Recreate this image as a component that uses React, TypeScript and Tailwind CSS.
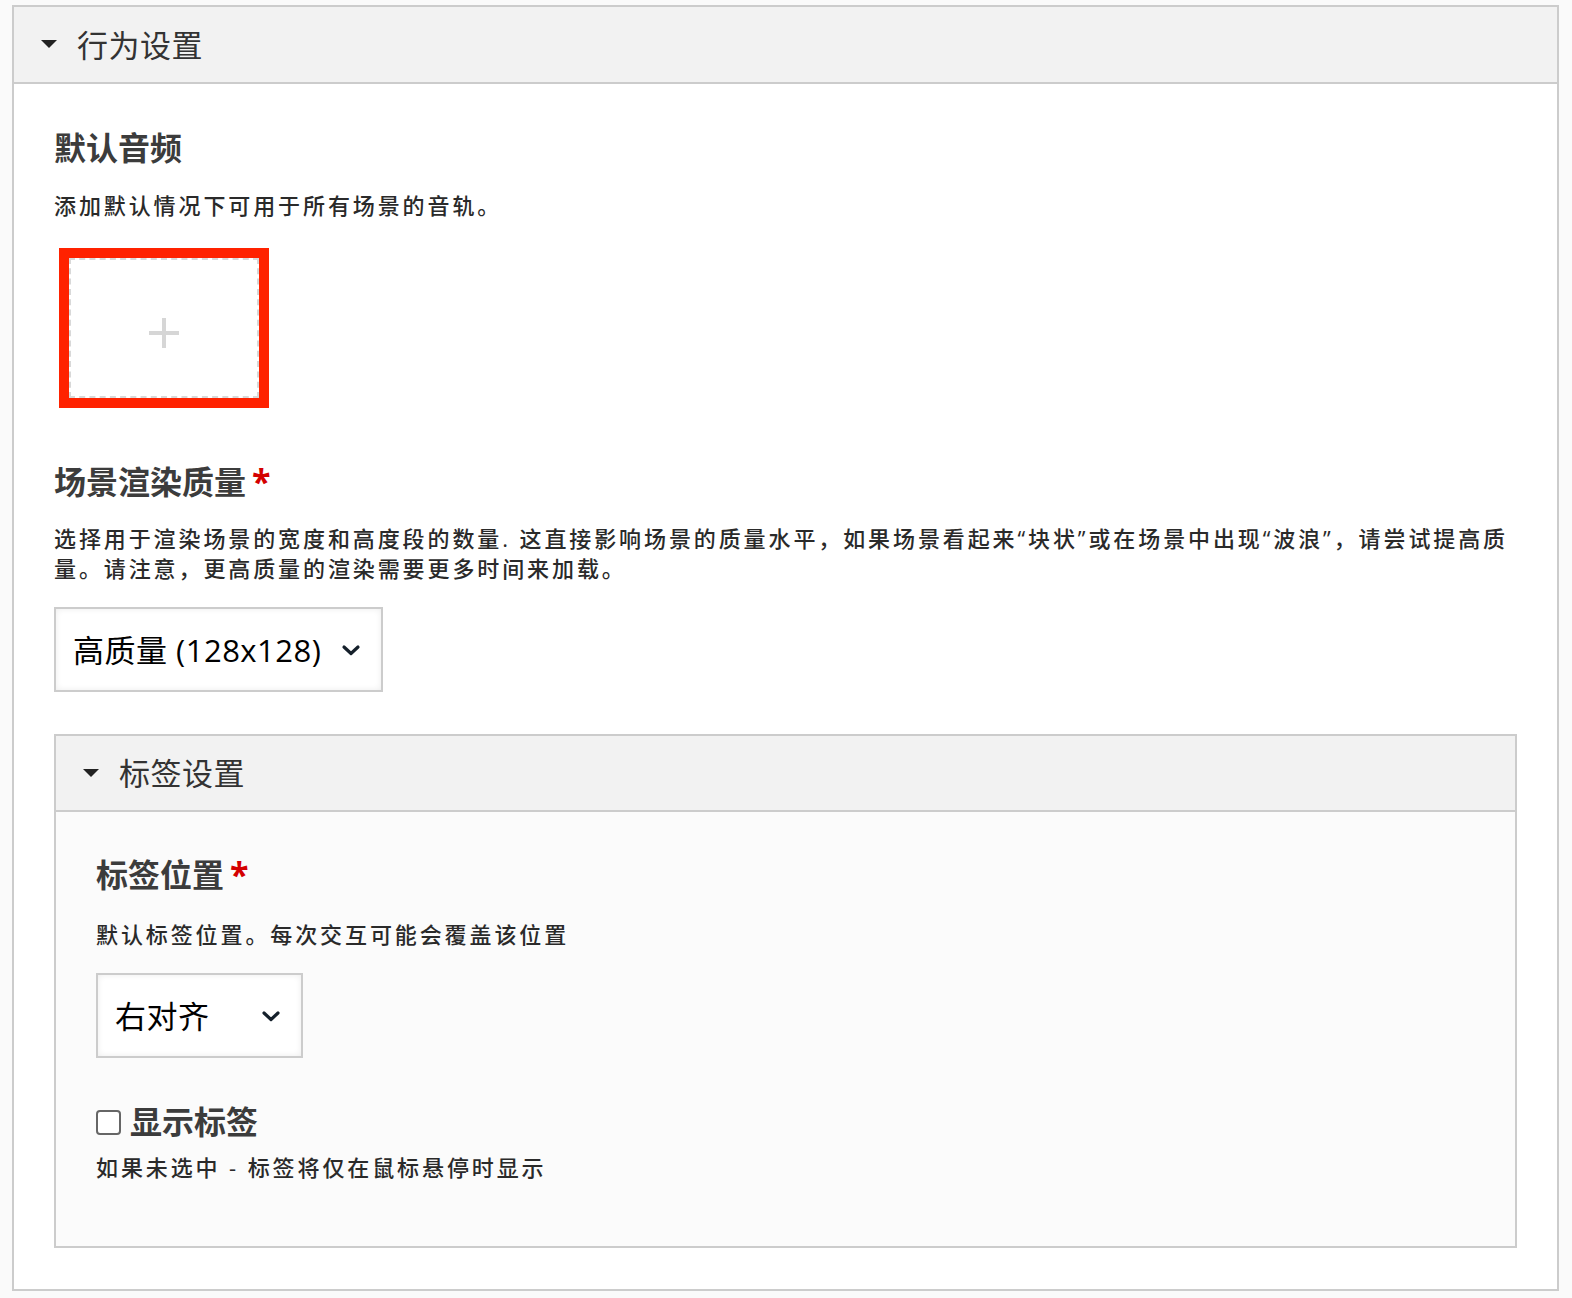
import React from 'react';

const font = { fontFamily: '"Open Sans", "Noto Sans CJK SC", sans-serif' };

function Caret() {
    return (
        <svg width="16" height="9" viewBox="0 0 16 9" className="shrink-0">
            <path d="M0 0 L16 0 L8 8 Z" fill="#222" />
        </svg>
    );
}

function Chevron() {
    return (
        <svg width="20" height="14" viewBox="0 0 20 14" className="shrink-0">
            <path d="M3 4 L10 10.5 L17 4" fill="none" stroke="#15202b" strokeWidth="3.2" strokeLinecap="round" strokeLinejoin="round" />
        </svg>
    );
}

function Select({ label, width }: { label: string; width: string }) {
    return (
        <div className={`${width} h-[85px] flex items-center justify-between pl-[17px] pr-[20px] bg-white border-2 border-[#cccccc] shadow-[inset_0_0_6px_rgba(0,0,0,0.08)]`}>
            <span className="text-[31px] leading-[40px] tracking-[0.5px] text-black">{label}</span>
            <Chevron />
        </div>
    );
}

function Required() {
    return <span className="text-[#d40000] text-[34px] leading-[34px] ml-[6px] relative top-[2px]">*</span>;
}

export default function App() {
    return (
        <div style={font} className="min-h-[1298px] bg-[#fafafa] pt-[5px] pl-[12px]">
            <div className="w-[1547px] border-2 border-[#cccccc] bg-white">
                <div className="h-[77px] bg-[#f2f2f2] border-b-2 border-[#cccccc] flex items-center pl-[27px] gap-[20px]">
                    <Caret />
                    <span className="text-[31px] leading-[40px] tracking-[0.5px] text-[#333]">行为设置</span>
                </div>

                <div className="px-[40px] pt-[44px] pb-[41px]">
                    <h2 className="text-[32px] leading-[40px] font-bold text-[#3c3c3c]">默认音频</h2>
                    <p className="mt-[22px] text-[22px] leading-[30px] tracking-[2.9px] font-medium text-[#2a2a2a]">添加默认情况下可用于所有场景的音轨。</p>

                    <div className="mt-[28px] ml-[5px] w-[210px] h-[160px] border-[10px] border-[#ff2200] bg-white">
                        <div className="w-full h-full border-2 border-dashed border-[#d8d8d8] flex items-center justify-center pt-[10px]">
                            <svg width="34" height="34" viewBox="0 0 34 34">
                                <path d="M17 2 V32 M2 17 H32" stroke="#d6d6d6" strokeWidth="4" />
                            </svg>
                        </div>
                    </div>

                    <h2 className="mt-[54px] text-[32px] leading-[40px] font-bold text-[#3c3c3c] flex items-start">
                        场景渲染质量<Required />
                    </h2>
                    <p className="mt-[21px] text-[22px] leading-[30px] tracking-[2.9px] font-medium text-[#2a2a2a]">
                        选择用于渲染场景的宽度和高度段的数量. 这直接影响场景的质量水平，如果场景看起来“块状”或在场景中出现“波浪”，请尝试提高质量。请注意，更高质量的渲染需要更多时间来加载。
                    </p>

                    <div className="mt-[24px]">
                        <Select label="高质量 (128x128)" width="w-[329px]" />
                    </div>

                    <div className="mt-[42px] border-2 border-[#cccccc] bg-[#fbfbfb]">
                        <div className="h-[76px] bg-[#f2f2f2] border-b-2 border-[#cccccc] flex items-center pl-[27px] gap-[20px]">
                            <Caret />
                            <span className="text-[31px] leading-[40px] tracking-[0.5px] text-[#333]">标签设置</span>
                        </div>
                        <div className="px-[40px] pt-[43px] pb-[64px]">
                            <h3 className="text-[32px] leading-[40px] font-bold text-[#3c3c3c] flex items-start">
                                标签位置<Required />
                            </h3>
                            <p className="mt-[24px] text-[22px] leading-[30px] tracking-[2.9px] font-medium text-[#2a2a2a]">默认标签位置。每次交互可能会覆盖该位置</p>
                            <div className="mt-[24px]">
                                <Select label="右对齐" width="w-[207px]" />
                            </div>
                            <label className="mt-[44px] flex items-center gap-[9px]">
                                <input type="checkbox" className="w-[25px] h-[25px] appearance-none rounded-[4px] border-2 border-[#666] bg-white" />
                                <span className="text-[32px] leading-[40px] font-bold text-[#3c3c3c]">显示标签</span>
                            </label>
                            <p className="mt-[10px] text-[22px] leading-[30px] tracking-[2.9px] font-medium text-[#2a2a2a]">如果未选中 - 标签将仅在鼠标悬停时显示</p>
                        </div>
                    </div>
                </div>
            </div>
        </div>
    );
}
